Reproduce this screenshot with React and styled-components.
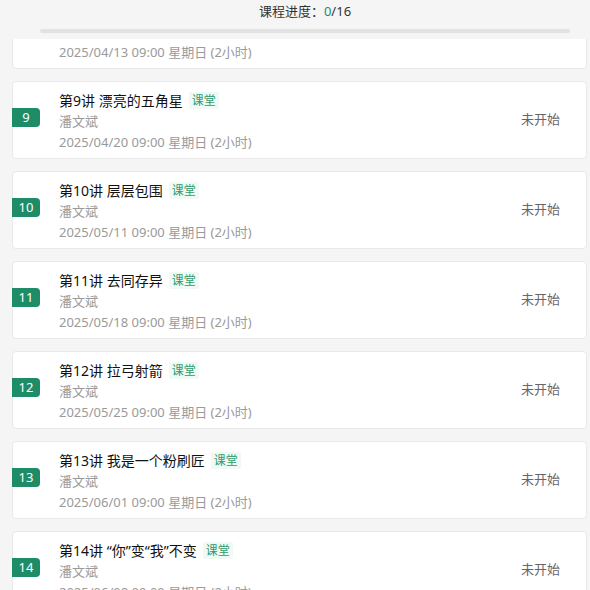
import { styled, createGlobalStyle } from 'styled-components'

const Global = createGlobalStyle`
html, body {
  margin: 0;
  padding: 0;
  background: #f5f5f5;
}
body {
  font-family: "Noto Sans", "Noto Sans CJK SC", sans-serif;
}
`

const Page = styled.div`
width: 590px;
height: 590px;
overflow: hidden;
display: flex;
flex-direction: column;
background: #f5f5f5;
`

const Header = styled.div`
flex: none;
display: flex;
flex-direction: column;
align-items: center;
padding: 2px 0 0 20px;
gap: 9px;
background: #f5f5f5;
height: 39px;
box-sizing: border-box;
`

const Progress = styled.div`
font-size: 13px;
line-height: 18px;
color: #333;
span { color: #1e8c67; }
`

const Track = styled.div`
width: 530px;
height: 4px;
border-radius: 2px;
background: #e2e2e2;
`

const Viewport = styled.div`
flex: 1;
overflow: hidden;
padding: 0 3px 0 12px;
`

const List = styled.div`
display: flex;
flex-direction: column;
gap: 12px;
margin-top: -48px;
`

const Card = styled.div`
height: 78px;
box-sizing: border-box;
background: #fff;
border: 1px solid #e9e9e9;
border-radius: 4px;
display: flex;
align-items: center;
`

const Badge = styled.div`
flex: none;
width: 28px;
height: 19px;
margin-left: -1px;
margin-top: -5px;
border-radius: 0 4px 4px 0;
background: #1e8c67;
color: #fff;
font-size: 13px;
line-height: 19px;
text-align: center;
`

const Info = styled.div`
flex: 1;
display: flex;
flex-direction: column;
padding: 2px 0 0 19px;
`

const Title = styled.div`
display: flex;
align-items: center;
gap: 6px;
font-size: 14px;
line-height: 21px;
color: #111;
`

const Tag = styled.span`
font-size: 12px;
line-height: 17px;
padding: 0 3px;
color: #2f9a6c;
background: #f1f9f5;
border-radius: 2px;
`

const Meta = styled.div`
font-size: 13px;
line-height: 21px;
color: #9a9a9a;
`

const Status = styled.div`
flex: none;
width: 65px;
font-size: 13px;
color: #666;
margin-top: -4px;
`

const lessons = [
  { no: 8, title: '第8讲', date: '2025/04/13 09:00 星期日 (2小时)' },
  { no: 9, title: '第9讲 漂亮的五角星', date: '2025/04/20 09:00 星期日 (2小时)' },
  { no: 10, title: '第10讲 层层包围', date: '2025/05/11 09:00 星期日 (2小时)' },
  { no: 11, title: '第11讲 去同存异', date: '2025/05/18 09:00 星期日 (2小时)' },
  { no: 12, title: '第12讲 拉弓射箭', date: '2025/05/25 09:00 星期日 (2小时)' },
  { no: 13, title: '第13讲 我是一个粉刷匠', date: '2025/06/01 09:00 星期日 (2小时)' },
  { no: 14, title: '第14讲 “你”变“我”不变', date: '2025/06/08 09:00 星期日 (2小时)' },
]

export default function App() {
  return (
    <Page>
      <Global />
      <Header>
        <Progress>课程进度：<span>0</span>/16</Progress>
        <Track />
      </Header>
      <Viewport>
        <List>
          {lessons.map((l) => (
            <Card key={l.no}>
              <Badge>{l.no}</Badge>
              <Info>
                <Title>
                  {l.title}
                  <Tag>课堂</Tag>
                </Title>
                <Meta>潘文斌</Meta>
                <Meta>{l.date}</Meta>
              </Info>
              <Status>未开始</Status>
            </Card>
          ))}
        </List>
      </Viewport>
    </Page>
  )
}
